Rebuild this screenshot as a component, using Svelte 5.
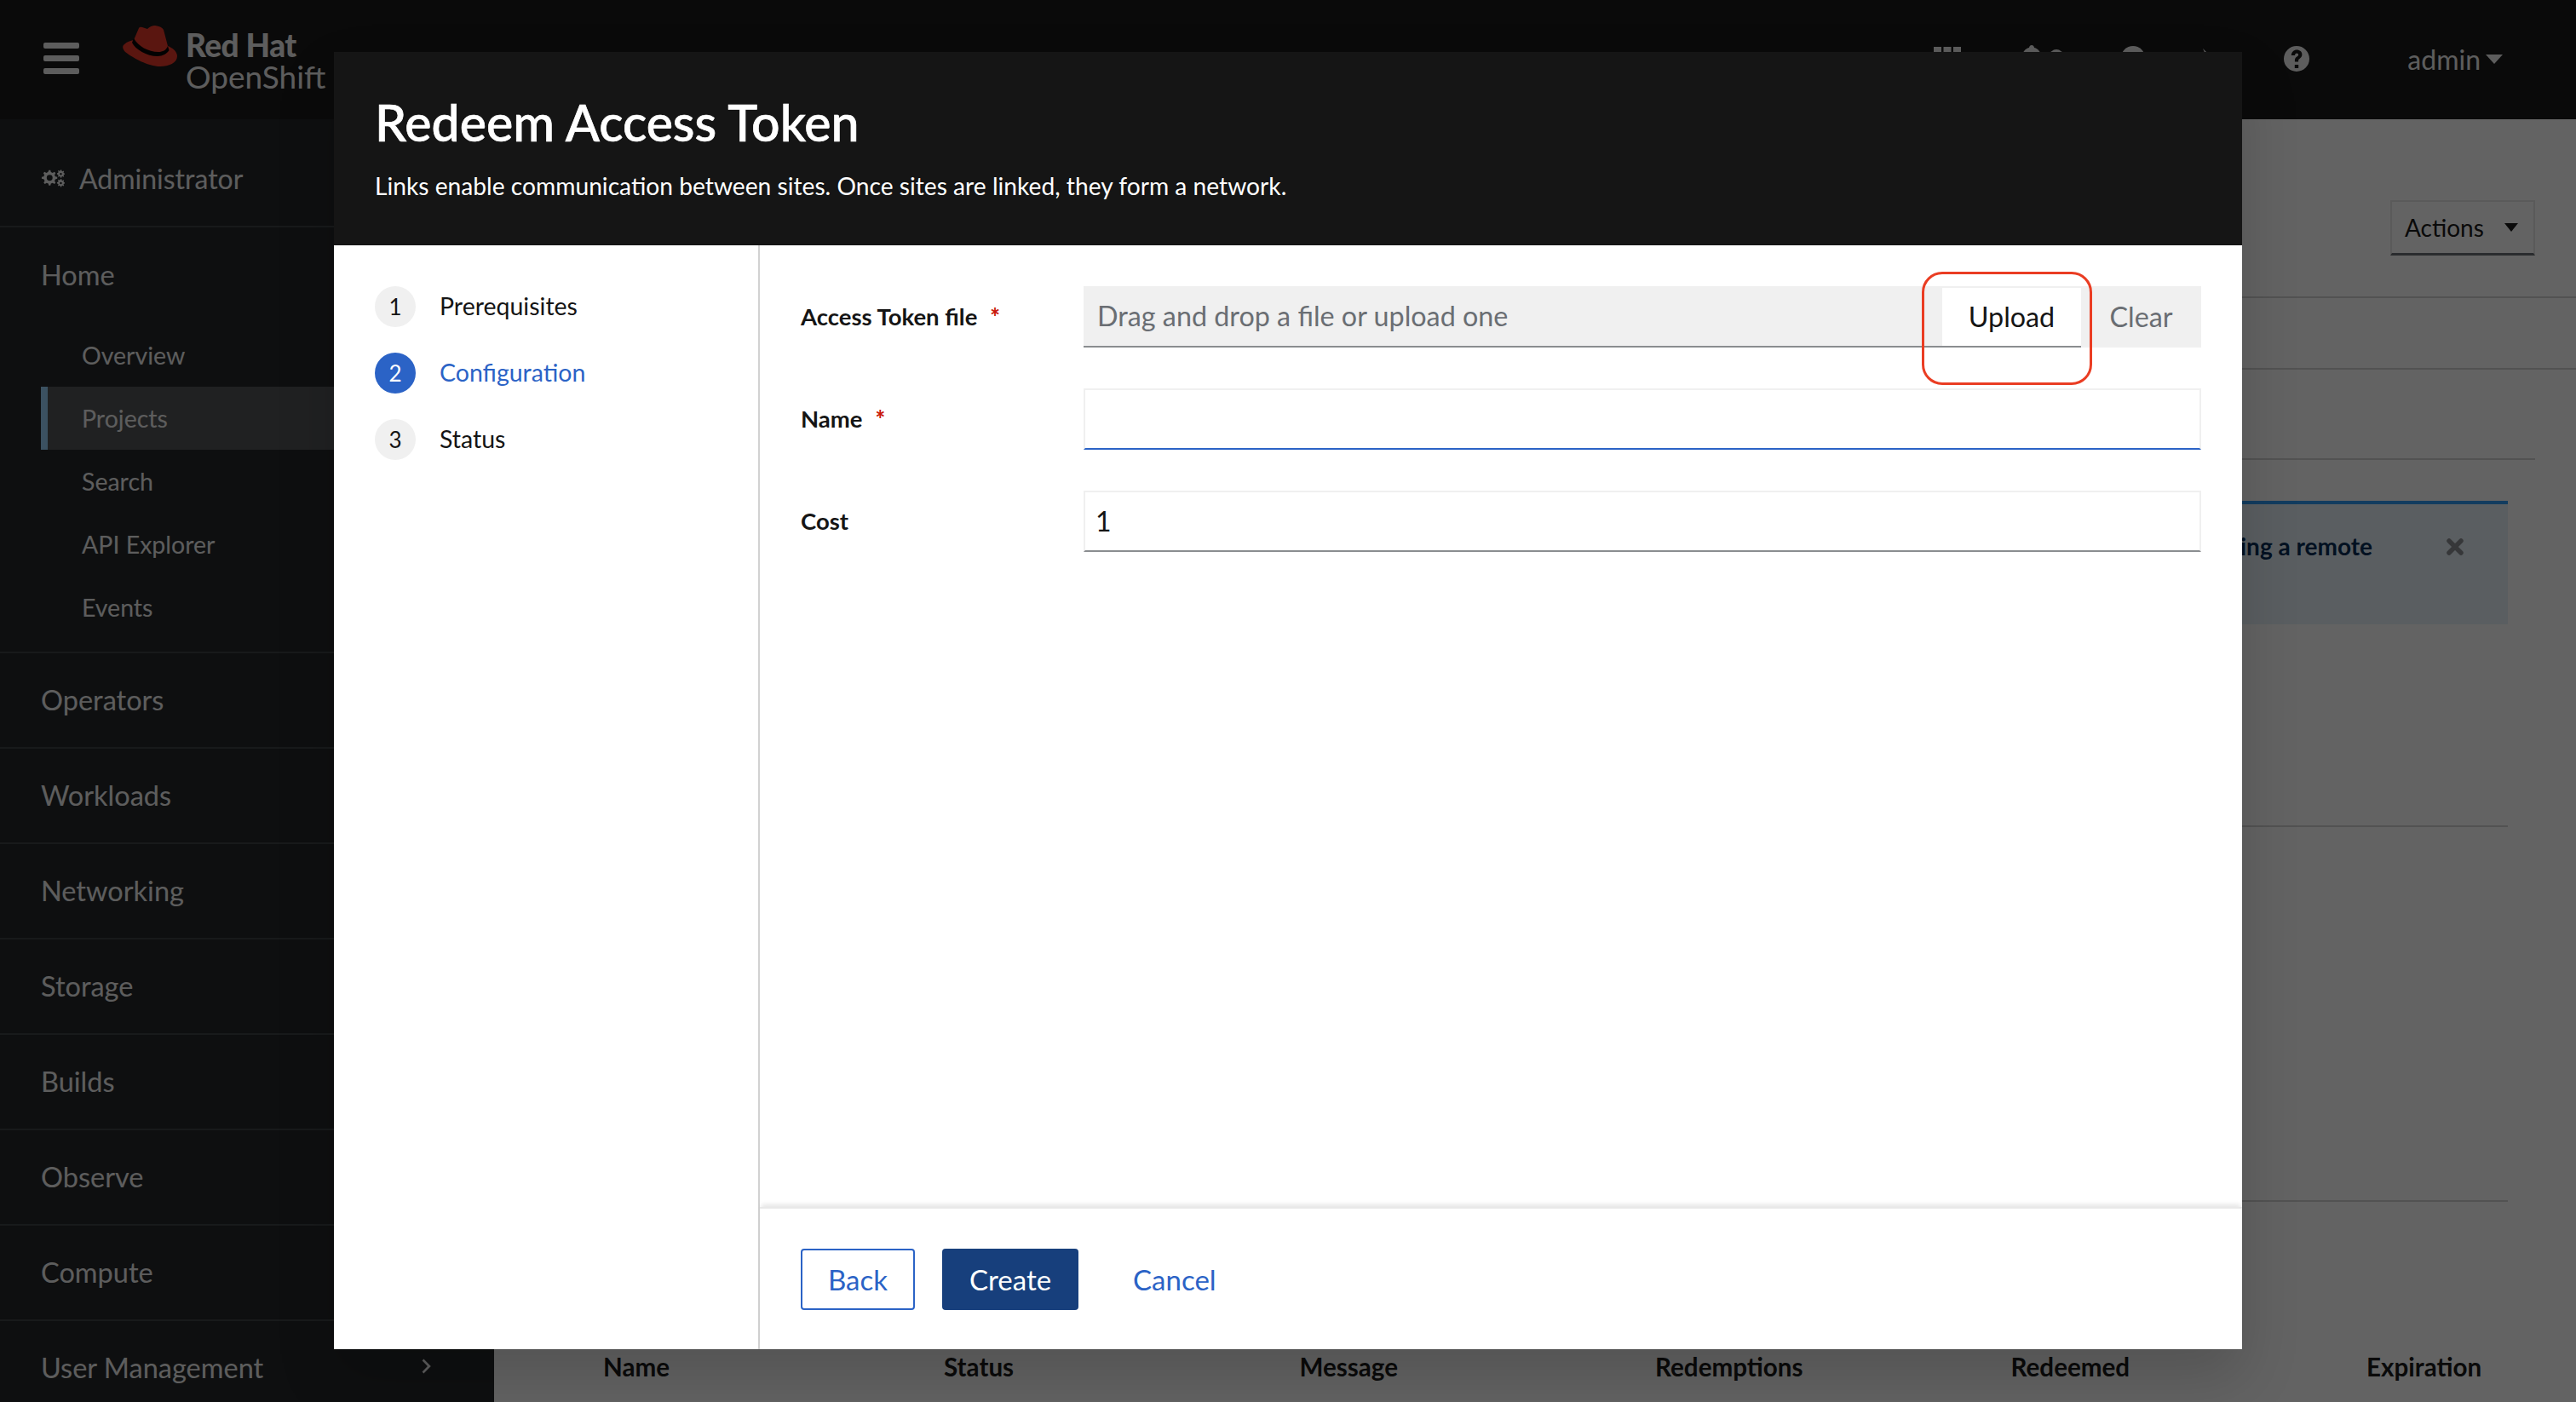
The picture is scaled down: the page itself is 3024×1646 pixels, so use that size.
<script lang="ts">
  interface NavGroup {
    label: string;
    chevron?: boolean;
  }

  const homeItems = ["Overview", "Projects", "Search", "API Explorer", "Events"];
  const groups: NavGroup[] = [
    { label: "Operators" },
    { label: "Workloads" },
    { label: "Networking" },
    { label: "Storage" },
    { label: "Builds" },
    { label: "Observe" },
    { label: "Compute" },
    { label: "User Management", chevron: true },
  ];
  const columns = ["Name", "Status", "Message", "Redemptions", "Redeemed", "Expiration"];
  const steps = ["Prerequisites", "Configuration", "Status"];
</script>

<div class="page">
  <header class="topbar">
    <div class="burger"><span></span><span></span><span></span></div>
    <svg class="hat" viewBox="0 0 64 48" aria-hidden="true">
      <path fill="#e83525" d="M13 17L19 3Q20 1 23 2L29 4Q33 0 38 0Q46 1 48 5L53 24C58 26 64 30 64 36C64 44 54 48 44 48C30 48 12 38 3 31C0 28-1 24 2 22C5 19 9 18 13 17Z" />
      <path fill="#000" d="M13 15C18 24 30 31 42 31C47 31 51 29 53 24L54.500 29C52 33 47 36 41 36C28 36 15 28 11 20Z" />
    </svg>
    <div class="brand">
      <span class="brand-top">Red Hat</span>
      <span class="brand-bottom">OpenShift</span>
    </div>
    <div class="top-right">
      <svg class="top-icon grid" viewBox="0 0 32 32" aria-hidden="true">
        <path d="M0 2h9v8H0zM11.500 2h9v8h-9zM23 2h9v8h-9z" />
      </svg>
      <svg class="top-icon bell" viewBox="0 0 54 32" aria-hidden="true">
        <path d="M15 0c2 0 3 2 3 3 5 1 8 6 8 10v6l3 4H1l3-4v-6c0-4 3-9 8-10 0-1 1-3 3-3z" />
        <circle cx="44" cy="13" r="8" />
      </svg>
      <svg class="top-icon plus" viewBox="0 0 32 32" aria-hidden="true">
        <circle cx="15" cy="15" r="14" />
      </svg>
      <svg class="top-icon term" viewBox="0 0 32 32" aria-hidden="true">
        <path d="M9 4l12 12-5 4z" />
      </svg>
      <svg class="top-icon help" viewBox="0 0 32 32" aria-hidden="true">
        <path fill-rule="evenodd" d="M16 1a15 15 0 1 0 0 30 15 15 0 0 0 0-30zm-2.200 22h4.400v4h-4.400zM9.800 12c.2-4 3-6.500 6.400-6.500 3.600 0 6.200 2.300 6.200 5.500 0 2.600-1.500 3.900-2.900 5-1.100.8-1.400 1.300-1.400 2.400v1h-4.200v-1.400c0-2.200 1-3.400 2.500-4.500 1.200-.9 1.700-1.400 1.700-2.300 0-1-.8-1.800-1.900-1.800-1.300 0-2.100.9-2.200 2.600z" />
      </svg>
      <span class="user">admin<i class="caret"></i></span>
    </div>
  </header>

  <div class="body">
    <nav class="sidebar">
      <div class="perspective">
        <svg viewBox="0 0 30 24" aria-hidden="true">
          <path fill-rule="evenodd" d="M10 5l2 0 .6 2.500 2.200 1 2.200-1.300 1.500 1.500-1.300 2.200.9 2.100 2.500.7v2.100l-2.500.7-.9 2.100 1.300 2.200-1.500 1.500-2.200-1.300-2.200.9-.6 2.500h-2l-.7-2.500-2.100-.9-2.200 1.300-1.500-1.500 1.300-2.200-.9-2.100L1 15.800v-2.100l2.500-.7.900-2.100-1.300-2.200 1.500-1.500 2.200 1.300 2.100-1zm1 6a3.700 3.700 0 1 0 0 7.400 3.700 3.700 0 0 0 0-7.400z" transform="translate(0 -4)" />
          <path fill-rule="evenodd" d="M25 2l1 .3.200 1.300 1.200.5 1-.7.700.8-.7 1 .5 1.200 1.200.3v1.100l-1.200.3-.5 1.200.7 1-.8.700-1-.7-1.200.5-.3 1.300h-1.100l-.3-1.300-1.200-.5-1 .7-.8-.7.7-1-.5-1.200-1.300-.3V6.200l1.300-.3.500-1.200-.7-1 .8-.8 1 .7 1.200-.5zm.1 4a1.200 1.200 0 1 0 0 2.800 1.200 1.200 0 0 0 0-2.800z" transform="translate(0 -1.500)" />
          <path fill-rule="evenodd" d="M25 2l1 .3.200 1.300 1.200.5 1-.7.700.8-.7 1 .5 1.200 1.200.3v1.100l-1.200.3-.5 1.200.7 1-.8.700-1-.7-1.200.5-.3 1.300h-1.100l-.3-1.300-1.200-.5-1 .7-.8-.7.7-1-.5-1.200-1.300-.3V6.200l1.300-.3.500-1.200-.7-1 .8-.8 1 .7 1.200-.5zm.1 4a1.200 1.200 0 1 0 0 2.800 1.200 1.200 0 0 0 0-2.800z" transform="translate(0 10)" />
        </svg>
        Administrator
      </div>
      <section class="home">
        <div class="group-label home-label">Home</div>
        {#each homeItems as item}
          <a class="sub" class:current={item === "Projects"} href="#top">{item}</a>
        {/each}
      </section>
      {#each groups as group}
        <div class="group">
          <span class="group-label">{group.label}</span>
          {#if group.chevron}
            <svg class="chevron" viewBox="0 0 10 16" aria-hidden="true">
              <path d="M2 1l7 7-7 7-1.500-1.500L5.800 8 .5 2.500z" />
            </svg>
          {/if}
        </div>
      {/each}
    </nav>

    <main class="content">
      <div class="actions-row">
        <button class="actions">Actions<i class="caret dark"></i></button>
      </div>
      <div class="tabs-row"></div>
      <div class="rule-row"></div>
      <div class="alert">
        <span class="alert-text">Learn about creating a remote</span>
        <svg class="alert-close" viewBox="0 0 20 20" aria-hidden="true">
          <path d="M3 3L17 17M17 3L3 17" />
        </svg>
      </div>
      <div class="block first"></div>
      <div class="block second"></div>
      <div class="table-head">
        {#each columns as col}
          <span>{col}</span>
        {/each}
      </div>
    </main>
  </div>

  <div class="backdrop">
    <div class="modal">
      <header class="modal-head">
        <h1>Redeem Access Token</h1>
        <p>Links enable communication between sites. Once sites are linked, they form a network.</p>
      </header>
      <div class="wizard">
        <ol class="steps">
          {#each steps as step, i}
            <li class:active={i === 1}>
              <span class="num">{i + 1}</span>
              <span class="step-label">{step}</span>
            </li>
          {/each}
        </ol>
        <div class="pane">
          <form class="form">
            <label for="token">Access Token file<b>*</b></label>
            <div class="upload">
              <div class="upload-hint">Drag and drop a file or upload one</div>
              <button type="button" class="upload-btn">Upload</button>
              <button type="button" class="clear-btn">Clear</button>
            </div>
            <label for="name">Name<b>*</b></label>
            <input id="name" class="text focused" />
            <label for="cost">Cost</label>
            <input id="cost" class="text" value="1" />
          </form>
          <footer class="foot">
            <button type="button" class="btn back">Back</button>
            <button type="button" class="btn create">Create</button>
            <button type="button" class="btn cancel">Cancel</button>
          </footer>
        </div>
      </div>
      <div class="callout"></div>
    </div>
  </div>
</div>

<style>
  :global(body) {
    margin: 0;
    background: #fff;
    font-family: "Lato", "Liberation Sans", sans-serif;
  }
  .page {
    position: relative;
    width: 3024px;
    height: 1646px;
    overflow: hidden;
    display: flex;
    flex-direction: column;
    font-size: 28px;
  }

  .topbar {
    height: 140px;
    flex: none;
    background: #151515;
    color: #f0f0f0;
    display: flex;
    align-items: center;
  }
  .burger {
    margin-left: 51px;
    width: 42px;
    display: flex;
    flex-direction: column;
    gap: 8px;
    margin-top: -3px;
  }
  .burger span {
    height: 7px;
    border-radius: 2px;
    background: #f0f0f0;
  }
  .hat {
    width: 64px;
    height: 48px;
    margin-left: 51px;
    margin-top: -32px;
    flex: none;
  }
  .brand {
    display: flex;
    flex-direction: column;
    margin-left: 10px;
    margin-top: 1px;
    line-height: 37px;
  }
  .brand-top {
    font-size: 37px;
    font-weight: 900;
    letter-spacing: -0.5px;
  }
  .brand-bottom {
    font-size: 37px;
  }
  .top-right {
    margin-left: auto;
    display: flex;
    align-items: center;
    margin-right: 86px;
  }
  .top-icon {
    height: 32px;
    width: 32px;
    fill: #f0f0f0;
    margin-top: -3px;
  }
  .grid {
    margin-right: 68px;
  }
  .bell {
    width: 54px;
    margin-right: 65px;
  }
  .plus {
    margin-right: 56px;
  }
  .term {
    margin-right: 71px;
  }
  .help {
    margin-right: 114px;
  }
  .user {
    font-size: 32px;
    display: flex;
    align-items: center;
    margin-top: -2px;
  }
  .caret {
    display: inline-block;
    width: 0;
    height: 0;
    margin-left: 6px;
    border: 10px solid transparent;
    border-bottom: 0;
    border-top: 11px solid #f0f0f0;
  }

  .body {
    flex: 1;
    display: flex;
    min-height: 0;
  }
  .sidebar {
    width: 580px;
    flex: none;
    background: #212427;
    color: #f0f0f0;
  }
  .perspective {
    height: 127px;
    box-sizing: border-box;
    border-bottom: 2px solid #3c3f42;
    padding: 14px 0 0 48px;
    display: flex;
    align-items: center;
    gap: 17px;
    font-size: 32px;
  }
  .perspective svg {
    width: 28px;
    height: 24px;
    fill: #f0f0f0;
  }
  .home {
    height: 500px;
    box-sizing: border-box;
    border-bottom: 2px solid #3c3f42;
    padding-top: 29px;
  }
  .group-label {
    font-size: 32.5px;
  }
  .home-label {
    padding-left: 48px;
    height: 84px;
    line-height: 54px;
  }
  .sub {
    display: block;
    height: 74px;
    line-height: 74px;
    padding-left: 96px;
    color: inherit;
    text-decoration: none;
    font-size: 28.5px;
  }
  .sub.current {
    background: #4f5255;
    border-left: 8px solid #96cffa;
    margin-left: 48px;
    padding-left: 40px;
  }
  .group {
    height: 112px;
    box-sizing: border-box;
    border-bottom: 2px solid #3c3f42;
    display: flex;
    align-items: center;
    justify-content: space-between;
    padding: 0 73px 2px 48px;
  }
  .chevron {
    width: 12px;
    height: 20px;
    fill: #f0f0f0;
    margin-top: -2px;
  }

  .content {
    flex: 1;
    background: #fff;
    display: flex;
    flex-direction: column;
    color: #151515;
    min-width: 0;
  }
  .actions-row {
    height: 210px;
    flex: none;
    box-sizing: border-box;
    border-bottom: 2px solid #d2d2d2;
    display: flex;
    justify-content: flex-end;
    padding: 95px 48px 0 0;
  }
  .actions {
    width: 170px;
    height: 65px;
    box-sizing: border-box;
    background: #fff;
    border: 2px solid #e8e8e8;
    border-bottom: 3px solid #6a6e73;
    font: inherit;
    font-size: 28px;
    color: #151515;
    display: flex;
    align-items: center;
    justify-content: space-between;
    padding: 0 18px 0 15px;
  }
  .caret.dark {
    border-width: 10px 8px 0;
    border-top-color: #151515;
  }
  .tabs-row {
    height: 84px;
    flex: none;
    box-sizing: border-box;
    border-bottom: 2px solid #d2d2d2;
  }
  .rule-row {
    height: 106px;
    flex: none;
    box-sizing: border-box;
    border-bottom: 2px solid #d2d2d2;
    margin-right: 48px;
  }
  .alert {
    margin: 48px 80px 0 48px;
    height: 145px;
    flex: none;
    box-sizing: border-box;
    background: #e7f1fa;
    border-top: 4px solid #2b9af3;
    display: flex;
    justify-content: flex-end;
    align-items: flex-start;
    padding: 32px 52px 0 0;
    font-weight: 700;
    font-size: 28px;
    color: #002952;
    gap: 87px;
  }
  .alert-close {
    width: 20px;
    height: 20px;
    fill: none;
    stroke: #8a8d90;
    stroke-width: 5.5;
    stroke-linecap: round;
    margin-top: 8px;
  }
  .block {
    flex: none;
    box-sizing: border-box;
    margin: 0 80px 0 48px;
    border-bottom: 2px solid #d2d2d2;
  }
  .block.first {
    height: 238px;
  }
  .block.second {
    height: 440px;
  }
  .table-head {
    display: grid;
    grid-template-columns: 400px repeat(5, 417.5px);
    padding: 174px 0 0 128px;
    flex: none;
    font-weight: 700;
    font-size: 29.6px;
    line-height: 40px;
    white-space: nowrap;
  }

  .backdrop {
    position: absolute;
    inset: 0;
    background: rgba(3, 3, 3, 0.62);
  }
  .modal {
    position: absolute;
    left: 392px;
    top: 61px;
    width: 2240px;
    height: 1523px;
    display: flex;
    flex-direction: column;
    background: #fff;
    box-shadow: 0 32px 64px rgba(3, 3, 3, 0.16);
  }
  .modal-head {
    height: 227px;
    flex: none;
    box-sizing: border-box;
    background: #151515;
    color: #fff;
    padding: 48px 48px 0;
  }
  .modal-head h1 {
    margin: 0;
    font-size: 59px;
    line-height: 70px;
    font-weight: 500;
    -webkit-text-stroke: 0.7px #fff;
  }
  .modal-head p {
    margin: 19px 0 0;
    font-size: 28.2px;
    line-height: 40px;
  }
  .wizard {
    flex: 1;
    display: flex;
    min-height: 0;
  }
  .steps {
    width: 500px;
    flex: none;
    box-sizing: border-box;
    list-style: none;
    margin: 0;
    padding: 48px 0 0 48px;
    border-right: 2px solid #d2d2d2;
    display: flex;
    flex-direction: column;
    gap: 30px;
    color: #151515;
    font-size: 28.5px;
  }
  .steps li {
    display: flex;
    align-items: center;
    gap: 28px;
  }
  .step-label {
    margin-top: -2px;
  }
  .num {
    width: 48px;
    height: 48px;
    border-radius: 50%;
    background: #f0f0f0;
    display: flex;
    align-items: center;
    justify-content: center;
    font-size: 26px;
  }
  .active {
    color: #2b63c6;
  }
  .active .num {
    background: #2b63c6;
    color: #fff;
  }
  .pane {
    flex: 1;
    display: flex;
    flex-direction: column;
    min-width: 0;
  }
  .form {
    flex: 1;
    padding: 48px 48px 0 48px;
    display: grid;
    grid-template-columns: 332px 1fr;
    grid-auto-rows: 72px;
    row-gap: 48px;
    align-items: center;
  }
  .form label {
    font-size: 27.5px;
    font-weight: 700;
    color: #151515;
    margin-top: -2px;
  }
  .form label b {
    color: #c9190b;
    margin-left: 15px;
  }
  .upload {
    display: flex;
    height: 72px;
    background: #f0f0f0;
    font-size: 32.3px;
    color: #6a6e73;
  }
  .upload-hint {
    flex: 1;
    display: flex;
    align-items: center;
    padding: 0 0 2px 16px;
    border-bottom: 2px solid #8a8d90;
  }
  .upload-btn,
  .clear-btn {
    font: inherit;
    border: 0;
    padding: 0 0 2px;
  }
  .upload-btn {
    width: 163px;
    margin-top: 2px;
    background: #fff;
    color: #151515;
    border-bottom: 2px solid #8a8d90;
    box-sizing: border-box;
  }
  .clear-btn {
    width: 141px;
    background: transparent;
    color: #6a6e73;
  }
  .text {
    height: 72px;
    box-sizing: border-box;
    width: 100%;
    border: 2px solid #f0f0f0;
    border-bottom: 2px solid #8a8d90;
    padding: 0 12px 2px;
    font: inherit;
    font-size: 32px;
    color: #151515;
    outline: none;
  }
  .text.focused {
    border-bottom-color: #2b63c6;
  }
  .foot {
    height: 167px;
    flex: none;
    box-sizing: border-box;
    border-top: 2px solid #e8e8e8;
    box-shadow: 0 -5px 5px -2px rgba(3, 3, 3, 0.1);
    padding: 0 48px;
    display: flex;
    gap: 32px;
    align-items: center;
  }
  .btn {
    height: 72px;
    border-radius: 4px;
    font: inherit;
    font-size: 33px;
    padding: 0 32px;
    background: transparent;
    color: #2b63c6;
    border: 0;
  }
  .back {
    border: 2px solid #2b63c6;
    padding: 0 30px;
  }
  .create {
    background: #173f7c;
    color: #fff;
  }
  .callout {
    position: absolute;
    left: 1864px;
    top: 258px;
    width: 200px;
    height: 133px;
    box-sizing: border-box;
    border: 3px solid #ea3d23;
    border-radius: 24px;
  }
</style>
